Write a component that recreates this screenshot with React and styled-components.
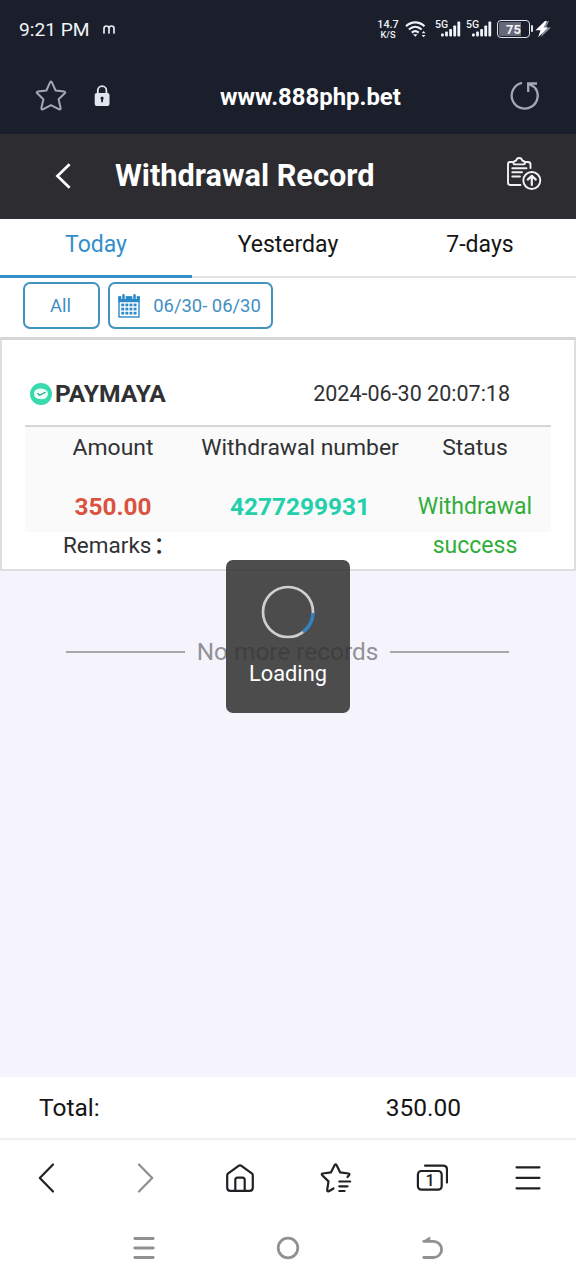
import React, { useState } from "react";
import styled, { createGlobalStyle } from "styled-components";

const tabs = ["Today", "Yesterday", "7-days"];

const record = {
  method: "PAYMAYA",
  time: "2024-06-30 20:07:18",
  amount: "350.00",
  number: "4277299931",
  status: "Withdrawal success",
};

function Signal() {
  return (
    <SignalBox>
      <span>5G</span>
      <svg width="20" height="16" viewBox="0 0 20 16" fill="#f1f3f8">
        <rect x="0" y="12.4" width="2.8" height="3" rx="0.8" />
        <rect x="4.1" y="10.6" width="2.8" height="4.8" rx="0.8" />
        <rect x="8.2" y="8" width="2.8" height="7.4" rx="0.8" />
        <rect x="12.3" y="4.4" width="2.8" height="11" rx="0.8" />
        <rect x="16.4" y="0.6" width="2.8" height="14.8" rx="0.8" />
      </svg>
    </SignalBox>
  );
}

function StatusBar() {
  return (
    <Status>
      <Clock>9:21 PM</Clock>
      <svg width="12" height="9" viewBox="0 0 12 9" fill="none" stroke="#e6e9f0" strokeWidth="1.7" strokeLinecap="round">
        <path d="M1 8V3.4C1 1.8 1.9 1 3.5 1S6 1.8 6 3.4V8M6 3.4C6 1.8 7 1 8.5 1S11 1.8 11 3.4V8" />
      </svg>
      <StatusRight>
        <Speed>
          <span>14.7</span>
          <small>K/S</small>
        </Speed>
        <Wifi width="22" height="18" viewBox="0 0 22 18" fill="none" stroke="#f1f3f8" strokeWidth="2.1">
          <path d="M1 6.2C6.5 1.1 14 1.1 19.5 6.2M3.9 9.5C7.8 6 12.7 6 16.6 9.5M6.8 12.6C9 10.7 11.5 10.7 13.7 12.6" />
          <path d="M8 14.3h4.6l-2.3 2.4z" fill="#f1f3f8" stroke="none" />
          <path d="M16.7 13.3l1.9-2.4 1.9 2.4zM16.7 14.9l1.9 2.4 1.9-2.4z" fill="#f1f3f8" stroke="none" />
        </Wifi>
        <Signal />
        <Signal />
        <Battery>75</Battery>
        <svg width="18" height="18" viewBox="0 0 18 18">
          <path d="M13 1L3 9.8h5L6 17 16 7.5h-5l3-6.5z" fill="#858a98" transform="translate(1 0)" />
          <path d="M11 1L1.5 10.3h5L4.2 17.2 14 7.5H9.5L13 1z" fill="#fff" />
        </svg>
      </StatusRight>
    </Status>
  );
}

function AddressBar() {
  return (
    <Address>
      <svg width="32" height="32" viewBox="0 0 32 32" fill="none" stroke="#a5a8b3" strokeWidth="2" strokeLinejoin="round">
        <path d="M15.2 2.2Q16 .8 16.8 2.2L20.6 10.5 29.3 11.6Q31 12 29.8 13.2L23.6 19.2 25.6 28Q25.7 30 24.1 29.3L16 25.1 7.9 29.3Q6.3 30 6.4 28L8.4 19.2 2.2 13.2Q1 12 2.7 11.6L11.4 10.5Z" />
      </svg>
      <svg width="16" height="22" viewBox="0 0 16 22">
        <path d="M3.8 9V5.4a4.3 4.3 0 0 1 8.6 0V9" fill="none" stroke="#e2e5ed" strokeWidth="1.8" />
        <rect x="0.7" y="8" width="14.8" height="13" rx="2" fill="#e2e5ed" />
        <path d="M8.1 11.5a1.8 1.8 0 0 1 .9 3.2v2.6H7.2v-2.6a1.8 1.8 0 0 1 .9-3.2z" fill="#1b1f2c" />
      </svg>
      <Url>www.888php.bet</Url>
      <svg width="30" height="30" viewBox="0 0 30 30" fill="none" stroke="#a5a8b3" strokeWidth="2.3">
        <path d="M12 1.9A13 13 0 1 0 24.6 6.2M18.2 11V2.5H27M18.6 2.8L24.6 6.2" />
      </svg>
    </Address>
  );
}

function TitleBar() {
  return (
    <Title>
      <svg width="18" height="28" viewBox="0 0 18 28" fill="none" stroke="#fff" strokeWidth="2.7">
        <path d="M16.6 2.2L4.4 14l12.2 11.8" />
      </svg>
      <h1>Withdrawal Record</h1>
      <ClipboardIcon width="36" height="36" viewBox="0 0 36 36" fill="none" stroke="#f1f1f3" strokeWidth="1.9" strokeLinecap="round" strokeLinejoin="round">
        <path d="M6.5 6H4.2Q2 6 2 8.2V26.5Q2 29 4.5 29H14.5M18.5 6h3.2Q24.5 6 24.5 8.5V12" />
        <path d="M9.3 8.4Q7 8.4 7.6 6.2 8.2 4.8 10 4.7 10.7 2 13.2 2T16.4 4.7Q18.2 4.8 18.8 6.2 19.4 8.4 17.1 8.4Z" />
        <path d="M6.3 12.2H20.5M6.3 16.3H16M6.3 20.5H14" />
        <circle cx="25.8" cy="24.5" r="8.5" />
        <path d="M25.8 29V20.4M21.8 23.6L25.8 19.8l4 3.8" strokeWidth="2.2" />
      </ClipboardIcon>
    </Title>
  );
}

function CalendarIcon() {
  const cols = [3.3, 7.4, 11.5, 15.6];
  const rows = [9.6, 13.7, 17.8];
  return (
    <svg width="22" height="24" viewBox="0 0 22 24">
      <rect x="1" y="3" width="20" height="20" fill="#fff" stroke="#2d8ac9" strokeWidth="1.4" />
      <rect x="0.3" y="2.4" width="21.4" height="5.8" fill="#2d8ac9" />
      <path d="M5.5 1v4M16.5 1v4" stroke="#fff" strokeWidth="4.4" />
      <path d="M5.5 1.4v3M16.5 1.4v3" stroke="#2d8ac9" strokeWidth="2.6" strokeLinecap="round" />
      {rows.map((y) =>
        cols.map((x) => <rect key={`${x}-${y}`} x={x} y={y} width="2.9" height="2.7" fill="#2d8ac9" />)
      )}
    </svg>
  );
}

function RecordCard({ data }) {
  return (
    <Card>
      <CardHead>
        <svg width="22" height="22" viewBox="0 0 22 22">
          <circle cx="11" cy="11" r="11" fill="#39d9ae" />
          <path d="M4 10Q4.5 5.5 11 5.5 18 6 18 11 17.5 16.3 11 16.3 3.5 16 4 10Z" fill="#ecfff9" />
          <path d="M7.5 10.3l2.2 1.9 6-3.2" fill="none" stroke="#27a786" strokeWidth="1.3" />
        </svg>
        <Method>{data.method}</Method>
        <Time>{data.time}</Time>
      </CardHead>
      <Details>
        <Cell>Amount</Cell>
        <Cell>Withdrawal number</Cell>
        <Cell>Status</Cell>
        <Value $color="#db5340">{data.amount}</Value>
        <Value $color="#24cfac">{data.number}</Value>
        <Result>{data.status}</Result>
      </Details>
      <Remarks>
        Remarks<b>：</b>
      </Remarks>
    </Card>
  );
}

function BrowserNav() {
  return (
    <Browser>
      <svg width="32" height="32" viewBox="0 0 32 32">
        <path d="M21 2.5L7.8 16 21 29.5" />
      </svg>
      <svg width="32" height="32" viewBox="0 0 32 32" opacity="0.5">
        <path d="M11 2.5L24.2 16 11 29.5" />
      </svg>
      <svg width="32" height="32" viewBox="0 0 32 32">
        <path d="M3.2 13.5Q3.2 12.2 4.2 11.3L14.6 3.8Q16 2.9 17.4 3.8L27.8 11.3Q28.8 12.2 28.8 13.5V25.4Q28.8 28.8 25.4 28.8H6.6Q3.2 28.8 3.2 25.4Z" />
        <path d="M11.3 28.5V18Q11.3 15.6 13.7 15.6H18.3Q20.7 15.6 20.7 18V28.5" />
      </svg>
      <svg width="32" height="32" viewBox="0 0 32 32">
        <path d="M13.5 26.5L8.8 29.2Q7 29.8 7.2 27.8L8.5 19.4 2.2 13.2Q1 12 2.8 11.5L11 10.3 14.7 3Q15.6 1.6 16.5 3L20.1 10.3 28.4 11.5Q30.2 12 29 13.2L27.5 15M19.3 19.5H30.2M19.3 24.3H27.5M19.3 29H24.6" />
      </svg>
      <TabsIcon>
        <svg width="32" height="32" viewBox="0 0 32 32">
          <rect x="1.9" y="9" width="23.8" height="18.7" rx="3.5" />
          <path d="M9 3.6H27Q31 3.6 31 7.6V20.5" />
        </svg>
        <span>1</span>
      </TabsIcon>
      <svg width="32" height="32" viewBox="0 0 32 32">
        <path d="M4.5 5.3h23M4.5 15.8h23M4.5 26.3h23" />
      </svg>
    </Browser>
  );
}

export default function App() {
  const [active, setActive] = useState(0);

  return (
    <>
      <GlobalStyle />
      <Screen>
        <StatusBar />
        <AddressBar />
        <TitleBar />
        <Tabs>
          {tabs.map((tab, index) => (
            <Tab key={tab} $active={index === active} onClick={() => setActive(index)}>
              {tab}
            </Tab>
          ))}
        </Tabs>
        <Filters>
          <Filter $width="77px">All</Filter>
          <Filter $width="165px">
            <CalendarIcon />
            <span>06/30- 06/30</span>
          </Filter>
        </Filters>
        <Content>
          <RecordCard data={record} />
          <NoMore>No more records</NoMore>
          <Loading>
            <svg width="54" height="54" viewBox="0 0 54 54" fill="none">
              <circle cx="27" cy="27" r="25" stroke="#cfcfcf" strokeWidth="2.7" />
              <path d="M52 28A25 25 0 0 1 42 47" stroke="#2f83c4" strokeWidth="3.4" />
            </svg>
            <span>Loading</span>
          </Loading>
        </Content>
        <Total>
          <span>Total:</span>
          <span>350.00</span>
        </Total>
        <BrowserNav />
        <SystemNav>
          <svg width="24" height="24" viewBox="0 0 24 24">
            <path d="M2.8 2.5h18.4M2.8 12h18.4M2.8 21.5h18.4" />
          </svg>
          <svg width="24" height="24" viewBox="0 0 24 24">
            <circle cx="12" cy="12" r="9.8" />
          </svg>
          <svg width="24" height="24" viewBox="0 0 24 24">
            <path d="M3.8 5.3H13.5A8.1 8.1 0 0 1 13.5 21.5H3.8" />
            <path d="M3.3 5.2L9.8 1.2V5.2Z" fill="#919191" strokeWidth="1" />
          </svg>
        </SystemNav>
      </Screen>
    </>
  );
}

const GlobalStyle = createGlobalStyle`
  * {
    box-sizing: border-box;
  }

  body {
    margin: 0;
    font-family: Roboto, "Noto Sans CJK SC", sans-serif;
  }

  svg {
    display: block;
    flex-shrink: 0;
  }
`;

const Screen = styled.div`
  display: flex;
  flex-direction: column;
  width: 576px;
  height: 1280px;
  overflow: hidden;
  background: #f5f4fd;
  color: #303133;
`;

const Status = styled.div`
  display: flex;
  align-items: center;
  gap: 13px;
  height: 58px;
  padding: 0 24px 0 19px;
  background: #1b1f2c;
  color: #f1f3f8;
`;

const Clock = styled.span`
  padding-top: 1px;
  font-size: 19.2px;
`;

const StatusRight = styled.div`
  display: flex;
  align-items: center;
  margin-left: auto;
`;

const Speed = styled.div`
  display: flex;
  flex-direction: column;
  align-items: center;
  width: 22px;
  margin-right: 6px;
  font-size: 10.8px;
  font-weight: 500;
  line-height: 11px;

  small {
    font-size: 9.2px;
    line-height: 9px;
  }
`;

const Wifi = styled.svg`
  margin-right: 8px;
`;

const SignalBox = styled.div`
  position: relative;
  width: 26px;
  margin-right: 5px;

  span {
    position: absolute;
    top: -1px;
    left: 0;
    font-size: 10.5px;
    font-weight: 500;
    line-height: 10px;
  }

  svg {
    margin-left: 6px;
  }
`;

const Battery = styled.div`
  position: relative;
  width: 33px;
  height: 18px;
  margin-right: 4px;
  border: 1.5px solid #dfe2ea;
  border-radius: 4px;
  background: linear-gradient(90deg, #666a78 75%, transparent 75%);
  background-clip: content-box;
  padding: 1px;
  font-size: 13px;
  font-weight: 700;
  line-height: 15px;
  text-align: center;

  &::after {
    content: "";
    position: absolute;
    top: 4px;
    right: -4px;
    width: 2px;
    height: 7px;
    border-radius: 1px;
    background: #dfe2ea;
  }
`;

const Address = styled.div`
  display: flex;
  align-items: center;
  gap: 27px;
  height: 76px;
  padding: 0 36px 0 35px;
  background: #1b1f2c;
`;

const Url = styled.div`
  flex: 1;
  padding: 1px 0 0 83px;
  color: #fff;
  font-size: 23.9px;
  font-weight: 700;
`;

const Title = styled.div`
  display: flex;
  align-items: center;
  height: 85px;
  padding: 0 34px 2px 53px;
  background: #2d2c30;

  h1 {
    flex: 1;
    margin: 0;
    padding-left: 44px;
    color: #fff;
    font-size: 30.7px;
    font-weight: 700;
  }
`;

const ClipboardIcon = styled.svg`
  margin-bottom: 3px;
`;

const Tabs = styled.div`
  display: grid;
  grid-template-columns: repeat(3, 1fr);
  height: 59px;
  background: #fff;
`;

const Tab = styled.button`
  padding: 0 0 ${(p) => (p.$active ? "6px" : "7px")};
  border: 0;
  border-bottom: ${(p) => (p.$active ? "3px solid #338fc9" : "2px solid #e3e3e3")};
  background: none;
  color: ${(p) => (p.$active ? "#338fc9" : "#151515")};
  font-family: inherit;
  font-size: 23px;
  cursor: pointer;
`;

const Filters = styled.div`
  display: flex;
  gap: 8px;
  height: 59px;
  padding: 4px 23px 0;
  background: #fff;
`;

const Filter = styled.button`
  display: flex;
  align-items: center;
  justify-content: center;
  gap: 13px;
  width: ${(p) => p.$width};
  height: 47px;
  padding: 0 2px 0 0;
  border: 2px solid #4393bf;
  border-radius: 7px;
  background: #fff;
  color: #3f8fc2;
  font-family: inherit;
  font-size: 18.4px;
`;

const Content = styled.div`
  position: relative;
  flex: 1;
`;

const Card = styled.div`
  height: 234px;
  padding: 29px 23px 0;
  border: 2px solid #dedede;
  border-top: 3px solid #d6d6d6;
  background: #fff;
`;

const CardHead = styled.div`
  display: flex;
  align-items: center;
  height: 58px;
  padding: 0 41px 7px 5px;
  border-bottom: 2px solid #d6d6d6;
`;

const Method = styled.strong`
  margin-left: 3px;
  font-size: 24.6px;
`;

const Time = styled.span`
  margin-left: auto;
  font-size: 21.5px;
`;

const Details = styled.div`
  display: grid;
  grid-template-columns: 176px 198px 152px;
  grid-template-rows: 60px 45px;
  background: #fafafa;
  text-align: center;
`;

const Cell = styled.span`
  font-size: 22.9px;
  line-height: 42px;
  white-space: nowrap;
`;

const Value = styled.strong`
  color: ${(p) => p.$color};
  font-size: 24.4px;
  line-height: 40px;
`;

const Result = styled.span`
  color: #31ae3a;
  font-size: 23px;
  line-height: 39px;
`;

const Remarks = styled.div`
  padding-left: 38px;
  font-size: 22.5px;
  line-height: 27px;

  b {
    margin-left: 2px;
    font-weight: 500;
  }
`;

const NoMore = styled.div`
  display: flex;
  align-items: center;
  gap: 12px;
  padding: 67px 67px 0 66px;
  color: #929297;
  font-size: 24.4px;
  line-height: 28px;
  white-space: nowrap;

  &::before,
  &::after {
    content: "";
    flex: 1;
    height: 2px;
    background: #a6a6ab;
  }
`;

const Loading = styled.div`
  position: absolute;
  top: 223px;
  left: 226px;
  display: flex;
  flex-direction: column;
  align-items: center;
  gap: 22px;
  width: 124px;
  height: 153px;
  padding-top: 25px;
  border-radius: 7px;
  background: rgba(50, 50, 50, 0.87);
  color: #fff;
  font-size: 21.8px;
  line-height: 26px;
`;

const Total = styled.div`
  display: flex;
  justify-content: space-between;
  height: 63px;
  padding: 0 115px 0 39px;
  border-bottom: 2px solid #efefef;
  background: #fff;
  color: #151515;
  font-size: 24.5px;
  line-height: 61px;
`;

const Browser = styled.div`
  display: grid;
  grid-template-columns: repeat(6, 1fr);
  align-items: center;
  justify-items: center;
  height: 76px;
  background: #fff;

  svg {
    fill: none;
    stroke: #202124;
    stroke-width: 2.2;
    stroke-linecap: round;
    stroke-linejoin: round;
  }
`;

const TabsIcon = styled.div`
  position: relative;

  span {
    position: absolute;
    top: 9px;
    left: 2px;
    width: 24px;
    color: #202124;
    font-size: 16px;
    font-weight: 500;
    line-height: 19px;
    text-align: center;
  }
`;

const SystemNav = styled.div`
  display: flex;
  justify-content: center;
  gap: 120px;
  height: 64px;
  padding-top: 20px;
  background: #fff;

  svg {
    fill: none;
    stroke: #919191;
    stroke-width: 2.8;
    stroke-linecap: round;
    stroke-linejoin: round;
  }
`;
